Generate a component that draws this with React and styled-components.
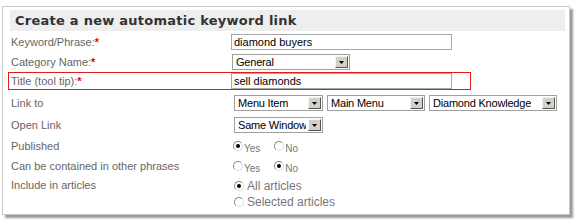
import styled, { createGlobalStyle } from "styled-components";

const Global = createGlobalStyle`
  body {
    margin: 0;
    background: #fff;
    font-family: Tahoma, "Liberation Sans", Arial, sans-serif;
  }
`;

const App = () => {
  return (
    <Page>
      <Global />
      <Panel>
        <Header>Create a new automatic keyword link</Header>
        <Form>
          <Row $h={20}>
            <Label>
              Keyword/Phrase:<Req>*</Req>
            </Label>
            <TextBox>diamond buyers</TextBox>
          </Row>
          <Row $h={20}>
            <Label>
              Category Name:<Req>*</Req>
            </Label>
            <Field $pad={1}>
              <Select $w={118} value="General" />
            </Field>
          </Row>
          <Row $h={18} $highlight>
            <Label>
              Title (tool tip):<Req>*</Req>
            </Label>
            <TextBox>sell diamonds</TextBox>
          </Row>
          <Spacer />
          <Row $h={22}>
            <Label>Link to</Label>
            <Field $pad={3} $gap={4}>
              <Select $w={89} value="Menu Item" />
              <Select $w={98} value="Main Menu" />
              <Select $w={128} value="Diamond Knowledge" />
            </Field>
          </Row>
          <Row $h={22}>
            <Label>Open Link</Label>
            <Field $pad={3}>
              <Select $w={89} value="Same Window" />
            </Field>
          </Row>
          <Row $h={20}>
            <Label>Published</Label>
            <Field $gap={14}>
              <Radio checked label="Yes" small />
              <Radio label="No" small />
            </Field>
          </Row>
          <Row $h={20}>
            <Label>Can be contained in other phrases</Label>
            <Field $gap={14}>
              <Radio label="Yes" small />
              <Radio checked label="No" small />
            </Field>
          </Row>
          <Row $h={36} $top>
            <Label>Include in articles</Label>
            <Stack>
              <Radio checked label="All articles" />
              <Radio label="Selected articles" />
            </Stack>
          </Row>
        </Form>
      </Panel>
    </Page>
  );
};

const Select = ({ $w, value }) => (
  <SelectBox $w={$w}>
    <SelectText>{value}</SelectText>
    <Arrow>
      <svg width="5" height="3" viewBox="0 0 5 3">
        <path d="M0 0h5L2.5 3z" fill="#000" />
      </svg>
    </Arrow>
  </SelectBox>
);

const Radio = ({ checked, label, small }) => (
  <RadioWrap>
    <Circle>{checked && <Dot />}</Circle>
    <RadioLabel $small={small}>{label}</RadioLabel>
  </RadioWrap>
);

const Page = styled.div`
  padding: 6px 6px 7px 2px;
  width: 576px;
  height: 222px;
  box-sizing: border-box;
`;

const Panel = styled.div`
  border: 1px solid #c8c8c8;
  background: #fff;
  box-shadow: 3px 3px 2px #9a9a9a;
  padding: 3px 4px 0 7px;
  height: 209px;
  box-sizing: border-box;
`;

const Header = styled.div`
  background: #eeeeee;
  height: 21px;
  padding-left: 5px;
  font-family: "DejaVu Sans", Verdana, sans-serif;
  font-weight: bold;
  font-size: 13px;
  line-height: 22px;
  color: #333;
  letter-spacing: 0.25px;
`;

const Form = styled.div`
  display: flex;
  flex-direction: column;
  padding-top: 1px;
`;

const Spacer = styled.div`
  height: 2px;
`;

const Row = styled.div`
  display: flex;
  align-items: ${(p) => (p.$top ? "flex-start" : "center")};
  height: ${(p) => p.$h}px;
  box-sizing: border-box;
  padding-top: ${(p) => (p.$top ? "2px" : "0")};
  margin-left: -2px;
  padding-left: 2px;
  width: 463px;
  border: 1px solid ${(p) => (p.$highlight ? "#e31b1b" : "transparent")};
`;

const Label = styled.div`
  width: 220px;
  flex-shrink: 0;
  font-size: 11px;
  color: #666;
  font-family: "Liberation Sans", Arial, sans-serif;
`;

const Req = styled.span`
  color: #e00;
  font-weight: bold;
`;

const TextBox = styled.div`
  width: 217px;
  height: 14px;
  border: 1px solid #a8a8a8;
  font-size: 11px;
  line-height: 14px;
  padding-left: 2px;
  color: #000;
  font-family: "Liberation Sans", Arial, sans-serif;
`;

const Field = styled.div`
  display: flex;
  align-items: center;
  gap: ${(p) => (p.$gap ? `${p.$gap}px` : "3px")};
  padding-left: ${(p) => (p.$pad !== undefined ? `${p.$pad}px` : "2px")};
`;

const SelectBox = styled.div`
  width: ${(p) => p.$w}px;
  height: 16px;
  box-sizing: border-box;
  border: 1px solid #a0a0a0;
  display: flex;
  align-items: center;
  justify-content: space-between;
  gap: 2px;
  padding: 0 1px 0 3px;
  background: #fff;
`;

const SelectText = styled.span`
  font-size: 11px;
  letter-spacing: -0.2px;
  color: #000;
  white-space: nowrap;
  overflow: hidden;
  font-family: "Liberation Sans", Arial, sans-serif;
`;

const Arrow = styled.span`
  width: 13px;
  height: 12px;
  flex-shrink: 0;
  box-sizing: border-box;
  background: #d4d0c8;
  border-top: 1px solid #f4f4f4;
  border-left: 1px solid #f4f4f4;
  border-right: 1px solid #555;
  border-bottom: 1px solid #555;
  display: flex;
  align-items: center;
  justify-content: center;
`;

const Stack = styled.div`
  display: flex;
  flex-direction: column;
  gap: 2px;
  padding-left: 3px;
`;

const RadioWrap = styled.span`
  display: inline-flex;
  align-items: center;
`;

const Circle = styled.span`
  width: 10px;
  height: 10px;
  border-radius: 50%;
  box-sizing: border-box;
  border: 1px solid #8a8a8a;
  border-right-color: #ddd;
  border-bottom-color: #ddd;
  background: #fff;
  display: flex;
  align-items: center;
  justify-content: center;
`;

const Dot = styled.span`
  width: 4px;
  height: 4px;
  border-radius: 50%;
  background: #000;
`;

const RadioLabel = styled.span`
  font-family: "Liberation Sans", Arial, sans-serif;
  color: #777;
  font-size: ${(p) => (p.$small ? "10px" : "12px")};
  margin-left: ${(p) => (p.$small ? "1px" : "3px")};
  padding-top: ${(p) => (p.$small ? "4px" : "0")};
`;

export default App;
